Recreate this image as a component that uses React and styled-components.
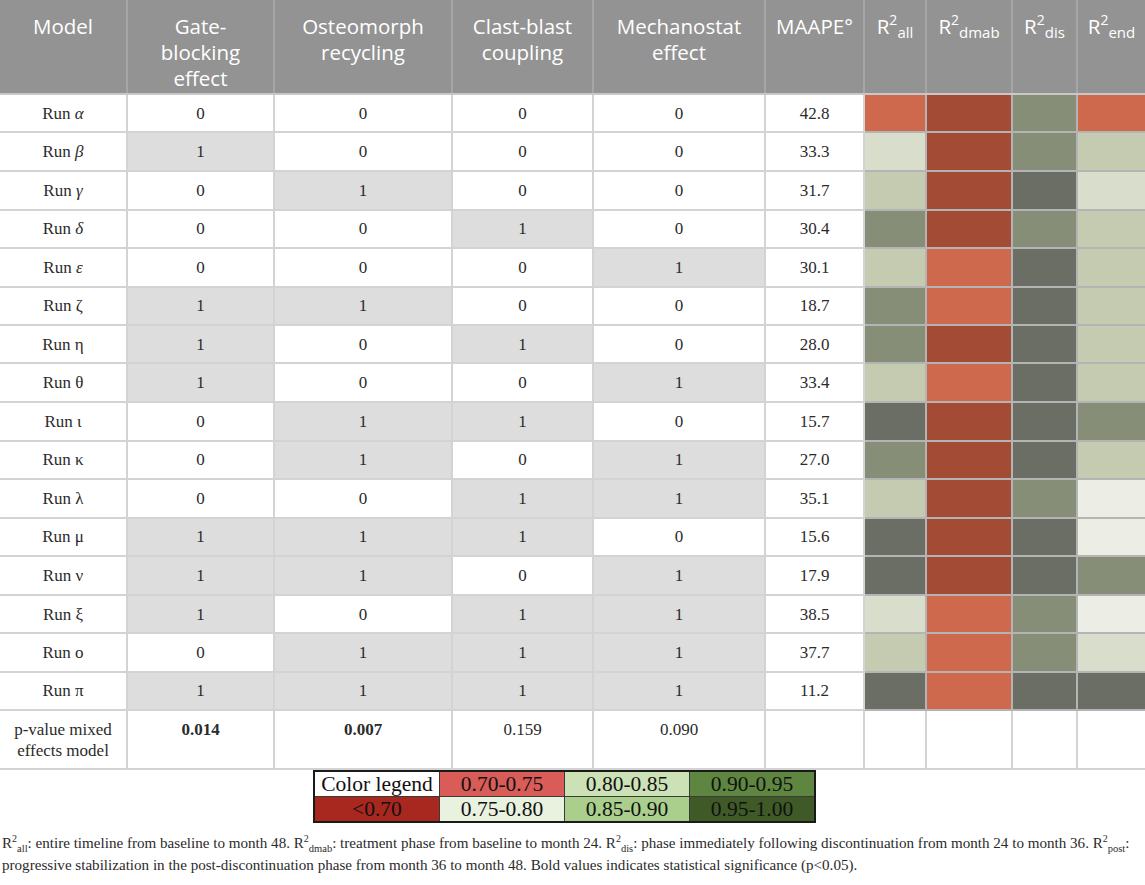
import React from "react";
import styled, { createGlobalStyle } from "styled-components";

const GlobalStyle = createGlobalStyle`
  body {
    margin: 0;
    background: #ffffff;
  }
`;

const Page = styled.div`
  width: 1145px;
  background: #ffffff;
`;

const Table = styled.table`
  width: 1145px;
  table-layout: fixed;
  border-collapse: collapse;
`;

const HeadCell = styled.th`
  height: 94px;
  box-sizing: border-box;
  padding: 13px ${(p) => (p.$narrow ? "12px" : "2px")} 0;
  background: #939393;
  color: #ffffff;
  font-family: "Open Sans", "Noto Sans", sans-serif;
  font-size: 20.5px;
  font-weight: 400;
  line-height: 26px;
  text-align: center;
  vertical-align: top;
  white-space: ${(p) => (p.$narrow ? "normal" : "nowrap")};
  border: 2px solid #a6a6a6;
  border-top: none;
  border-bottom-color: #c8c8c8;
  &:first-child {
    border-left: none;
  }
  &:last-child {
    border-right: none;
  }
`;

const Sup = styled.sup`
  font-size: 14px;
  line-height: 0;
  vertical-align: 9px;
`;

const Sub = styled.sub`
  font-size: 15px;
  line-height: 0;
  vertical-align: -4px;
`;

const Row = styled.tr`
  height: ${(p) => p.$h}px;
`;

const Cell = styled.td`
  padding: 0 4px;
  background: ${(p) => (p.$on ? "#dcdddc" : "#ffffff")};
  color: #2b2b2b;
  font-family: "Liberation Serif", "Times New Roman", serif;
  font-size: 17px;
  font-weight: ${(p) => (p.$bold ? 700 : 400)};
  text-align: center;
  vertical-align: ${(p) => (p.$top ? "top" : "middle")};
  padding-top: ${(p) => (p.$top ? "8px" : "0")};
  line-height: 21px;
  border: 2px solid #d3d3d3;
  &:first-child {
    border-left: none;
  }
  &:last-child {
    border-right: none;
  }
`;

const Greek = styled.span`
  font-style: ${(p) => (p.$italic ? "italic" : "normal")};
`;

const Swatch = styled.td`
  padding: 0;
  background: ${(p) => p.$bg};
  border: 2px solid #b4b4b4;
  &:last-child {
    border-right: none;
  }
`;

const LegendWrap = styled.div`
  display: flex;
  padding-left: 313px;
`;

const Legend = styled.table`
  border-collapse: collapse;
  border: 2px solid #1a1a1a;
  table-layout: fixed;
  width: 499px;
`;

const LegendCell = styled.td`
  width: 124px;
  height: 24px;
  padding: 0;
  background: ${(p) => p.$bg};
  border: 1px solid #3a3a3a;
  color: #111111;
  font-family: "Liberation Serif", "Times New Roman", serif;
  font-size: 21.5px;
  line-height: 24px;
  text-align: center;
  white-space: nowrap;
`;

const Footnote = styled.p`
  margin: 9px 0 0;
  padding: 0 2px;
  color: #2b2b2b;
  font-family: "Liberation Serif", "Times New Roman", serif;
  font-size: 15.1px;
  line-height: 22px;
`;

const NoteSup = styled.sup`
  font-size: 10px;
  line-height: 0;
`;

const NoteSub = styled.sub`
  font-size: 10.5px;
  line-height: 0;
`;

const widths = [127, 147, 178, 141, 172, 99, 62, 86, 65, 68];

const C = {
  orange: "#cf694d",
  red: "#a44b35",
  mid: "#878e78",
  dark: "#6b6e64",
  pale: "#c5cbb1",
  light: "#d8ddcc",
  faint: "#eceee6",
};

const runs = [
  ["α", true, [0, 0, 0, 0], "42.8", ["orange", "red", "mid", "orange"]],
  ["β", true, [1, 0, 0, 0], "33.3", ["light", "red", "mid", "pale"]],
  ["γ", true, [0, 1, 0, 0], "31.7", ["pale", "red", "dark", "light"]],
  ["δ", true, [0, 0, 1, 0], "30.4", ["mid", "red", "mid", "pale"]],
  ["ε", true, [0, 0, 0, 1], "30.1", ["pale", "orange", "dark", "pale"]],
  ["ζ", false, [1, 1, 0, 0], "18.7", ["mid", "orange", "dark", "pale"]],
  ["η", false, [1, 0, 1, 0], "28.0", ["mid", "red", "dark", "pale"]],
  ["θ", false, [1, 0, 0, 1], "33.4", ["pale", "orange", "dark", "pale"]],
  ["ι", false, [0, 1, 1, 0], "15.7", ["dark", "red", "dark", "mid"]],
  ["κ", false, [0, 1, 0, 1], "27.0", ["mid", "red", "dark", "pale"]],
  ["λ", false, [0, 0, 1, 1], "35.1", ["pale", "red", "mid", "faint"]],
  ["μ", false, [1, 1, 1, 0], "15.6", ["dark", "red", "dark", "faint"]],
  ["ν", false, [1, 1, 0, 1], "17.9", ["dark", "red", "dark", "mid"]],
  ["ξ", false, [1, 0, 1, 1], "38.5", ["light", "orange", "mid", "faint"]],
  ["ο", false, [0, 1, 1, 1], "37.7", ["pale", "orange", "mid", "light"]],
  ["π", false, [1, 1, 1, 1], "11.2", ["dark", "orange", "dark", "dark"]],
];

const legend = [
  [
    ["Color legend", "#ffffff"],
    ["0.70-0.75", "#d95c58"],
    ["0.80-0.85", "#cde1b7"],
    ["0.90-0.95", "#5f8640"],
  ],
  [
    ["<0.70", "#a8271e"],
    ["0.75-0.80", "#e9f1df"],
    ["0.85-0.90", "#aacf8d"],
    ["0.95-1.00", "#3f5a27"],
  ],
];

function R2({ sub }) {
  return (
    <>
      R<Sup>2</Sup>
      <Sub>{sub}</Sub>
    </>
  );
}

export default function App() {
  return (
    <Page>
      <GlobalStyle />
      <Table>
        <colgroup>
          {widths.map((w, i) => (
            <col key={i} style={{ width: w }} />
          ))}
        </colgroup>
        <thead>
          <tr>
            <HeadCell>Model</HeadCell>
            <HeadCell $narrow>Gate-blocking effect</HeadCell>
            <HeadCell $narrow>Osteomorph recycling</HeadCell>
            <HeadCell $narrow>Clast-blast coupling</HeadCell>
            <HeadCell $narrow>Mechanostat effect</HeadCell>
            <HeadCell>MAAPE°</HeadCell>
            <HeadCell>
              <R2 sub="all" />
            </HeadCell>
            <HeadCell>
              <R2 sub="dmab" />
            </HeadCell>
            <HeadCell>
              <R2 sub="dis" />
            </HeadCell>
            <HeadCell>
              <R2 sub="end" />
            </HeadCell>
          </tr>
        </thead>
        <tbody>
          {runs.map(([g, it, bits, maape, colors], i) => (
            <Row key={g} $h={i % 5 === 2 ? 39 : 38.4}>
              <Cell>
                Run <Greek $italic={it}>{g}</Greek>
              </Cell>
              {bits.map((b, j) => (
                <Cell key={j} $on={b === 1}>
                  {b}
                </Cell>
              ))}
              <Cell>{maape}</Cell>
              {colors.map((c, j) => (
                <Swatch key={j} $bg={C[c]} />
              ))}
            </Row>
          ))}
          <Row $h={59}>
            <Cell $top>
              p-value mixed
              <br />
              effects model
            </Cell>
            <Cell $top $bold>
              0.014
            </Cell>
            <Cell $top $bold>
              0.007
            </Cell>
            <Cell $top>0.159</Cell>
            <Cell $top>0.090</Cell>
            <Cell $top />
            <Cell $top />
            <Cell $top />
            <Cell $top />
            <Cell $top />
          </Row>
        </tbody>
      </Table>
      <LegendWrap>
        <Legend>
          <tbody>
            {legend.map((row, i) => (
              <tr key={i}>
                {row.map(([t, bg]) => (
                  <LegendCell key={t} $bg={bg}>
                    {t}
                  </LegendCell>
                ))}
              </tr>
            ))}
          </tbody>
        </Legend>
      </LegendWrap>
      <Footnote>
        R<NoteSup>2</NoteSup>
        <NoteSub>all</NoteSub>: entire timeline from baseline to month 48. R
        <NoteSup>2</NoteSup>
        <NoteSub>dmab</NoteSub>: treatment phase from baseline to month 24. R
        <NoteSup>2</NoteSup>
        <NoteSub>dis</NoteSub>: phase immediately following discontinuation from
        month 24 to month 36. R<NoteSup>2</NoteSup>
        <NoteSub>post</NoteSub>: progressive stabilization in the
        post-discontinuation phase from month 36 to month 48. Bold values
        indicates statistical significance (p&lt;0.05).
      </Footnote>
    </Page>
  );
}
